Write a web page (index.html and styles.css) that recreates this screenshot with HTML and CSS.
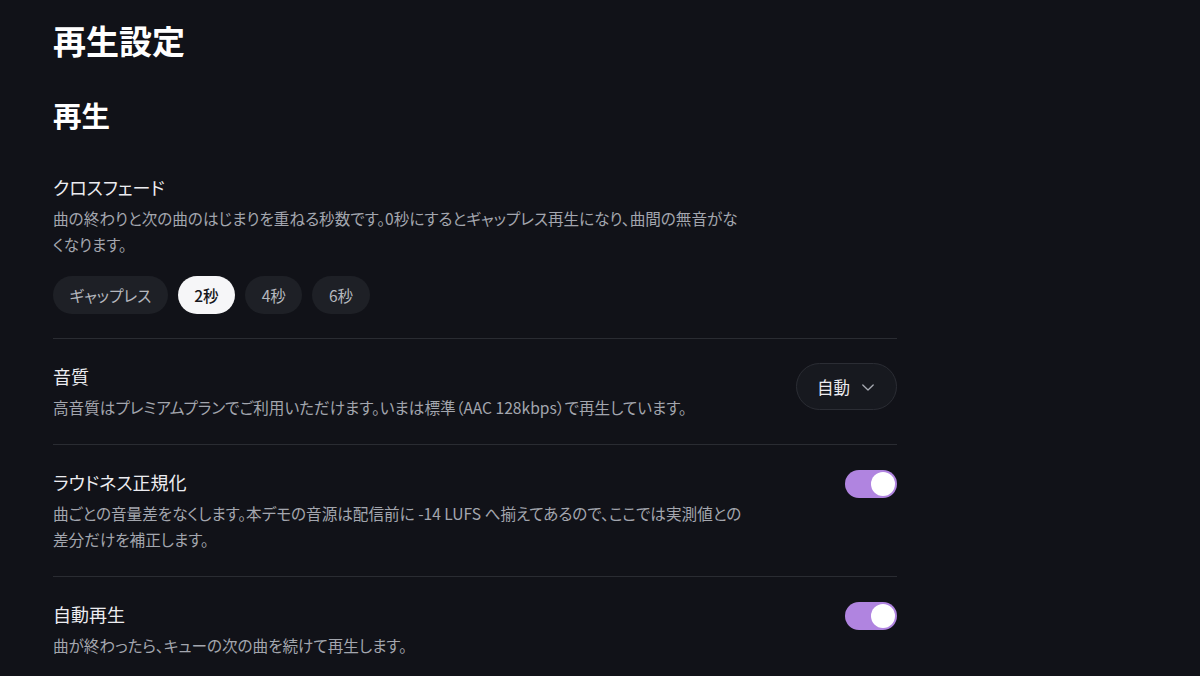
FILE: index.html
```html
<!DOCTYPE html>
<html lang="ja">
<head>
<meta charset="utf-8">
<link rel="stylesheet" href="styles.css">
</head>
<body>
<main class="page">
  <h1 class="title">再生設定</h1>
  <h2 class="section-title">再生</h2>

  <div class="row">
    <div class="row-text">
      <div class="label">クロスフェード</div>
      <p class="desc">曲の終わりと次の曲のはじまりを重ねる秒数です。0秒にするとギャップレス再生になり、曲間の無音がなくなります。</p>
      <div class="chips">
        <button class="chip">ギャップレス</button>
        <button class="chip chip-active">2秒</button>
        <button class="chip">4秒</button>
        <button class="chip">6秒</button>
      </div>
    </div>
  </div>

  <div class="row">
    <div class="row-text">
      <div class="label">音質</div>
      <p class="desc">高音質はプレミアムプランでご利用いただけます。いまは標準（AAC 128kbps）で再生しています。</p>
    </div>
    <button class="select">自動<svg class="chev" width="14" height="14" viewBox="0 0 14 14"><path d="M1.8 5 L7 10 L12.2 5" fill="none" stroke="#a8abb3" stroke-width="1.3" stroke-linecap="round" stroke-linejoin="round"/></svg></button>
  </div>

  <div class="row">
    <div class="row-text">
      <div class="label">ラウドネス正規化</div>
      <p class="desc">曲ごとの音量差をなくします。本デモの音源は配信前に -14 LUFS へ揃えてあるので、ここでは実測値との差分だけを補正します。</p>
    </div>
    <span class="toggle"><span class="knob"></span></span>
  </div>

  <div class="row">
    <div class="row-text">
      <div class="label">自動再生</div>
      <p class="desc">曲が終わったら、キューの次の曲を続けて再生します。</p>
    </div>
    <span class="toggle"><span class="knob"></span></span>
  </div>
</main>
</body>
</html>
```

FILE: styles.css
```css
* { box-sizing: border-box; }
html, body {
  margin: 0;
  padding: 0;
  background: #111218;
}
body {
  font-family: "Noto Sans CJK JP", "Noto Sans", sans-serif;
  color: #ececf0;
  font-feature-settings: "palt";
}
.page {
  width: 844px;
  margin-left: 53px;
  padding-top: 19px;
}
.title {
  margin: 0;
  font-size: 33px;
  line-height: 42px;
  font-weight: 700;
  color: #ffffff;
}
.section-title {
  margin: 34px 0 16px;
  font-size: 28.5px;
  line-height: 39px;
  font-weight: 700;
  color: #ffffff;
}
.row {
  display: flex;
  align-items: flex-start;
  justify-content: space-between;
  gap: 24px;
  padding: 24px 0;
  border-bottom: 1px solid #2a2c32;
}
.row:last-child { border-bottom: none; }
.row-text {
  flex: 1;
}
.label {
  font-size: 18px;
  line-height: 26px;
  color: #ececf0;
}
.desc {
  margin: 5px 0 0;
  max-width: 692px;
  font-size: 15.6px;
  line-height: 26px;
  color: #a3a6ae;
}
.chips {
  display: flex;
  gap: 10px;
  margin-top: 19px;
}
.chip {
  height: 38px;
  padding: 0 16.5px;
  border: none;
  border-radius: 19px;
  background: #1e2026;
  color: #b4b7be;
  font-family: inherit;
  font-feature-settings: "palt";
  font-size: 15.6px;
  line-height: 38px;
  cursor: pointer;
}
.chip-active {
  background: #f6f6f8;
  color: #16171c;
  font-weight: 500;
}
.select {
  display: flex;
  align-items: center;
  gap: 11px;
  height: 47px;
  padding: 0 21px 0 20px;
  border: 1px solid #2b2d34;
  border-radius: 24px;
  background: #17191f;
  color: #ececf0;
  font-family: inherit;
  font-size: 16.5px;
  flex-shrink: 0;
  cursor: pointer;
}
.chev { display: block; }
.toggle {
  position: relative;
  display: block;
  width: 52px;
  height: 28px;
  border-radius: 14px;
  background: #b084e0;
  flex-shrink: 0;
  margin-top: 1px;
}
.knob {
  position: absolute;
  top: 2px;
  right: 2px;
  width: 24px;
  height: 24px;
  border-radius: 50%;
  background: #ffffff;
}
```
